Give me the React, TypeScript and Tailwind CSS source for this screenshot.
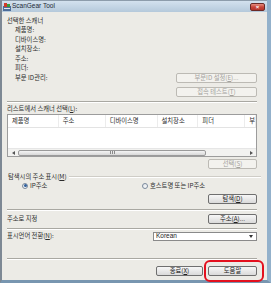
import React from "react";

const ko: React.CSSProperties = {
  fontFamily: '"Noto Sans CJK KR", "Noto Sans", sans-serif',
};

function Btn({
  children,
  w,
  disabled,
}: {
  children: React.ReactNode;
  w: string;
  disabled?: boolean;
}) {
  return (
    <div
      className={`${w} h-[10px] flex items-center justify-center rounded-[2px] border text-[6.3px] leading-none ${
        disabled
          ? "border-[#bcbab4] text-[#a5a39e] bg-[#f3f2ee]"
          : "border-[#6f6f6f] text-[#222222] bg-gradient-to-b from-[#f7f7f7] to-[#dadada]"
      }`}
    >
      {children}
    </div>
  );
}

function Sep() {
  return <div className="h-[2px] border-t border-t-[#a9a8a2] border-b border-b-white" />;
}

function Radio({ checked }: { checked?: boolean }) {
  return (
    <div className="w-[6px] h-[6px] rounded-full border border-[#7a8a9c] bg-gradient-to-br from-[#dfe3e8] to-white flex items-center justify-center">
      {checked && <div className="w-[3px] h-[3px] rounded-full bg-[#2f5f9c]" />}
    </div>
  );
}

export default function App() {
  const cols: [string, string][] = [
    ["제품명", "w-[51px]"],
    ["주소", "w-[47px]"],
    ["디바이스명", "w-[52px]"],
    ["설치장소", "w-[41px]"],
    ["피더", "w-[47px]"],
    ["부", "flex-1"],
  ];
  return (
    <div className="w-[271px] h-[289px] bg-white overflow-hidden" style={ko}>
      <div className="relative w-[271px] h-[283px] flex flex-col border-l-2 border-l-[#7d8894] border-r-4 border-r-[#93b1cb] border-b-[3px] border-b-[#7896b0]">
        {/* title bar */}
        <div className="h-[12px] flex items-center border-t border-t-[#8d9cab] bg-gradient-to-b from-[#d3e1ee] to-[#b5c9db]">
          <svg width="8" height="8" viewBox="0 0 8 8" className="ml-[1px]">
            <rect x="0" y="3" width="8" height="5" fill="#4d6d9a" />
            <rect x="1" y="0" width="3" height="4" fill="#d23a2a" />
            <rect x="4" y="1" width="3" height="3" fill="#3a9a3a" />
            <rect x="1" y="5" width="6" height="1" fill="#e8e8e8" />
          </svg>
          <span
            className="ml-[1px] text-[6.5px] leading-none text-[#1e2a36]"
            style={{ fontFamily: '"Liberation Sans", Arial, sans-serif' }}
          >
            ScanGear Tool
          </span>
          <div className="ml-auto mr-[2px] w-[15px] h-[8px] rounded-[2px] border border-[#6b2a26] bg-gradient-to-b from-[#e48c80] via-[#c8463a] to-[#b5332a] flex items-center justify-center">
            <span
              className="text-[6px] leading-none font-bold text-white"
              style={{ fontFamily: '"Liberation Sans", Arial, sans-serif' }}
            >
              ×
            </span>
          </div>
        </div>

        {/* body */}
        <div className="flex-1 bg-[#ecebe6] pl-[5px] pr-[10px] flex flex-col text-[6.3px] text-[#2b2b2b]">
          {/* selected scanner */}
          <div className="h-[88px] flex">
            <div className="flex flex-col pt-[4px]">
              <div className="h-[9px] leading-[9px]">선택한 스캐너</div>
              <div className="pl-[8px] flex flex-col">
                <div className="h-[9.5px] leading-[9.5px]">제품명:</div>
                <div className="h-[9.5px] leading-[9.5px]">디바이스명:</div>
                <div className="h-[9.5px] leading-[9.5px]">설치장소:</div>
                <div className="h-[9.5px] leading-[9.5px]">주소:</div>
                <div className="h-[9.5px] leading-[9.5px]">피더:</div>
                <div className="h-[9.5px] leading-[9.5px]">부문 ID관리:</div>
              </div>
            </div>
            <div className="ml-auto flex flex-col pt-[61px] gap-[4px]">
              <Btn w="w-[81px]" disabled>
                부문ID 설정(<u>E</u>)...
              </Btn>
              <Btn w="w-[81px]" disabled>
                접속 테스트(<u>T</u>)
              </Btn>
            </div>
          </div>
          <div className="mt-[1px]">
            <Sep />
          </div>

          {/* list */}
          <div className="mt-[1px] h-[9px] leading-[9px]">
            리스트에서 스캐너 선택(<u>L</u>):
          </div>
          <div className="mt-[1px] h-[43px] border border-[#9c9c9c] bg-white flex flex-col">
            <div className="h-[13px] flex border-b border-b-[#e3e3e3]">
              {cols.map(([t, w], i) => (
                <div
                  key={i}
                  className={`${w} h-full flex items-center pl-[4px] border-r border-r-[#ececec] leading-none`}
                >
                  {t}
                </div>
              ))}
            </div>
            <div className="flex-1" />
            <div className="h-[8px] flex items-center bg-[#f2f2f0] border-t border-t-[#e6e6e6]">
              <div className="w-[10px] h-full flex items-center justify-center">
                <svg width="3" height="4" viewBox="0 0 3 4">
                  <path d="M3 0 L0 2 L3 4 Z" fill="#555" />
                </svg>
              </div>
              <div className="w-[188px] h-[6px] rounded-[2px] border border-[#9a9a9a] bg-gradient-to-b from-[#f4f4f4] to-[#d8d8d8] flex items-center justify-center">
                <div className="flex gap-[1px]">
                  <div className="w-[1px] h-[3px] bg-[#8a8a8a]" />
                  <div className="w-[1px] h-[3px] bg-[#8a8a8a]" />
                  <div className="w-[1px] h-[3px] bg-[#8a8a8a]" />
                </div>
              </div>
              <div className="flex-1" />
              <div className="w-[10px] h-full flex items-center justify-center">
                <svg width="3" height="4" viewBox="0 0 3 4">
                  <path d="M0 0 L3 2 L0 4 Z" fill="#555" />
                </svg>
              </div>
            </div>
          </div>
          <div className="mt-[2px] flex justify-end">
            <Btn w="w-[49px]" disabled>
              선택(<u>S</u>)
            </Btn>
          </div>

          {/* address display group */}
          <div className="mt-[4px] h-[8px] flex items-center">
            <span className="leading-none pl-[1px]">
              탐색시의 주소 표시(<u>M</u>)
            </span>
            <div className="flex-1 ml-[2px] mr-[-4px] h-[2px] border-t border-t-[#cfcdc7] border-b border-b-white" />
          </div>
          <div className="h-[8px] flex items-end">
            <div className="ml-[15px] w-[120px] flex items-center gap-[2px]">
              <Radio checked />
              <span className="leading-none">IP주소</span>
            </div>
            <div className="flex items-center gap-[2px]">
              <Radio />
              <span className="leading-none">호스트명 또는 IP주소</span>
            </div>
          </div>
          <div className="mt-[5px] flex justify-end">
            <Btn w="w-[49px]">
              탐색(<u>D</u>)
            </Btn>
          </div>
          <div className="mt-[5px]">
            <Sep />
          </div>

          {/* address */}
          <div className="mt-[3px] h-[10px] flex items-center">
            <span className="leading-none">주소로 지정</span>
            <div className="ml-auto">
              <Btn w="w-[49px]">
                주소(<u>A</u>)...
              </Btn>
            </div>
          </div>
          <div className="mt-[4px]">
            <Sep />
          </div>

          {/* language */}
          <div className="mt-[2px] h-[9px] flex items-center">
            <span className="leading-none">
              표시언어 전환(<u>N</u>):
            </span>
            <div className="ml-auto w-[104px] h-[9px] border border-[#8a8a8a] bg-white flex items-center pl-[2px] pr-[3px]">
              <span
                className="leading-none text-[6.5px] text-[#222]"
                style={{ fontFamily: '"Liberation Sans", Arial, sans-serif' }}
              >
                Korean
              </span>
              <svg width="4" height="3" viewBox="0 0 4 3" className="ml-auto">
                <path d="M0 0 L4 0 L2 3 Z" fill="#333" />
              </svg>
            </div>
          </div>
          <div className="mt-[17px]">
            <Sep />
          </div>

          {/* bottom buttons */}
          <div className="mt-[6px] flex justify-end gap-[5px]">
            <Btn w="w-[47px]">
              종료(<u>X</u>)
            </Btn>
            <Btn w="w-[49px]">도움말</Btn>
          </div>
        </div>

        {/* red highlight ring */}
        <div className="absolute left-[202px] top-[260px] w-[60px] h-[22px] rounded-[6px] border-2 border-[#e3101e]" />
      </div>
    </div>
  );
}
